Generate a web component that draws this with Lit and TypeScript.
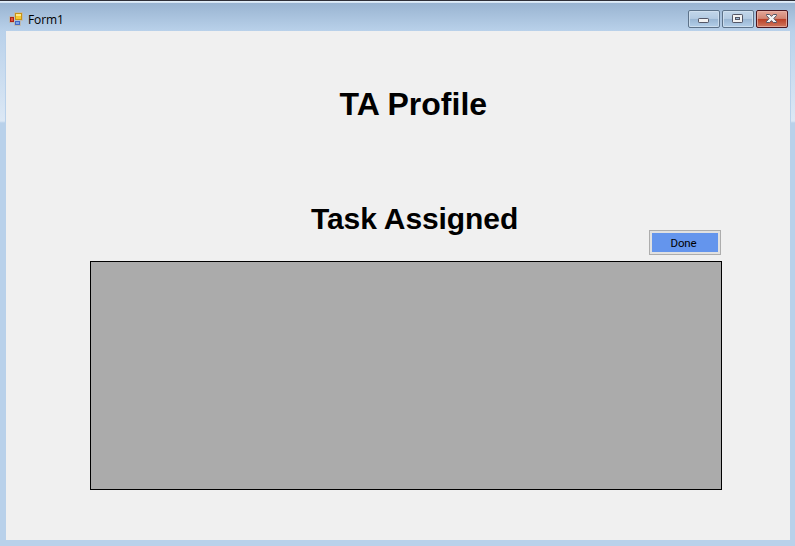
import { LitElement, html, css } from "lit";
import { customElement } from "lit/decorators.js";

@customElement("title-bar")
class TitleBar extends LitElement {
  static styles = css`
    :host { display: flex; height: 31px; box-sizing: border-box; padding: 10px 7px 0 9px; font: 12px "Open Sans", "Noto Sans", sans-serif; color: #000; }
    .icon { width: 14px; height: 14px; margin-top: 2px; flex: none; }
    .label { margin: 1px auto 0 5px; line-height: 17px; letter-spacing: -0.1px; }
    .controls { display: flex; gap: 2px; }
    .control { display: block; width: 32px; height: 18px; }
  `;
  render() {
    return html`
      <svg class="icon" viewBox="0 0 14 14">
        <path d="M.5 4.5h5v-4h8v8h-2v5h-6v-3h-5z" fill="#b7c2cb" stroke="#bdb9af"/>
        <rect x="6.5" y="1.5" width="6" height="6" fill="#f5c92f" stroke="#c79316"/>
        <path d="M7 2h5v2H7z" fill="#ffe789"/>
        <rect x="1.5" y="5.5" width="3" height="4" fill="#e0503c" stroke="#ad2214"/>
        <rect x="6.5" y="9.5" width="4" height="3" fill="#7ba5ec" stroke="#3f67c4"/>
      </svg>
      <span class="label">Form1</span>
      <div class="controls">
        <svg class="control" viewBox="0 0 32 18">
          <defs>
            <linearGradient id="blue" x2="0" y2="1"><stop stop-color="#c3d7ea"/><stop offset=".47" stop-color="#b4cbe2"/><stop offset=".48" stop-color="#98b5d2"/><stop offset="1" stop-color="#b5d0ea"/></linearGradient>
          </defs>
          <rect x=".5" y=".5" width="31" height="17" rx="1.5" fill="url(#blue)" stroke="#5d7289"/>
          <rect x="1.5" y="1.5" width="29" height="15" rx="1" fill="none" stroke="#d3e2f0" stroke-opacity=".8"/>
          <rect x="10.5" y="8.5" width="10" height="4" rx=".7" fill="#f2f2f2" stroke="#535666"/>
        </svg>
        <svg class="control" viewBox="0 0 32 18">
          <defs>
            <linearGradient id="blue2" x2="0" y2="1"><stop stop-color="#c3d7ea"/><stop offset=".47" stop-color="#b4cbe2"/><stop offset=".48" stop-color="#98b5d2"/><stop offset="1" stop-color="#b5d0ea"/></linearGradient>
          </defs>
          <rect x=".5" y=".5" width="31" height="17" rx="1.5" fill="url(#blue2)" stroke="#5d7289"/>
          <rect x="1.5" y="1.5" width="29" height="15" rx="1" fill="none" stroke="#d3e2f0" stroke-opacity=".8"/>
          <rect x="10.5" y="4.5" width="10" height="8" rx=".7" fill="#f2f2f2" stroke="#535666"/>
          <rect x="13.5" y="7.5" width="4" height="2" fill="#9db9d5" stroke="#535666"/>
        </svg>
        <svg class="control" viewBox="0 0 32 18">
          <defs>
            <linearGradient id="red" x2="0" y2="1"><stop stop-color="#e5a99b"/><stop offset=".47" stop-color="#d28472"/><stop offset=".48" stop-color="#b93c23"/><stop offset="1" stop-color="#d07b62"/></linearGradient>
          </defs>
          <rect x=".5" y=".5" width="31" height="17" rx="1.5" fill="url(#red)" stroke="#4b1620"/>
          <rect x="1.5" y="1.5" width="29" height="15" rx="1" fill="none" stroke="#e9b5a9" stroke-opacity=".75"/>
          <path d="M10.5 4.5h3.2l1.8 1.9 1.8-1.9h3.2v1l-2.7 3 2.7 3v1h-3.2l-1.8-1.9-1.8 1.9h-3.2v-1l2.7-3-2.7-3z" fill="#f3f3f3" stroke="#535666"/>
        </svg>
      </div>`;
  }
}

@customElement("app-root")
class AppRoot extends LitElement {
  static styles = css`
    :host {
      display: flex; flex-direction: column; width: 795px; height: 546px; box-sizing: border-box; overflow: hidden;
      background:
        linear-gradient(#2f3038, #2f3038) 0 0 / 100% 1px no-repeat,
        linear-gradient(#e5f1fb, #d0e0f0) 0 1px / 100% 2px no-repeat,
        linear-gradient(#99b4d1, #b9d1ea) 0 3px / 100% 28px no-repeat,
        linear-gradient(#b9d1ea, #b9d1ea) 5px 31px / 786px 515px no-repeat,
        linear-gradient(#b9d1ea, #dce8f5 90px, #b9d1ea 92px) 0 31px / 100% 515px no-repeat;
    }
    .client { display: flex; flex-direction: column; width: 784px; height: 509px; margin-left: 6px; background: #f0f0f0; font-family: "Liberation Sans", Arial, sans-serif; color: #000; }
    h1, h2 { margin: 0; font-weight: 700; white-space: nowrap; }
    h1 { margin: 54px 0 0 333.5px; font-size: 32px; line-height: 38px; }
    h2 { margin: 77px 0 0 305px; font-size: 30px; line-height: 37px; height: 30px; letter-spacing: -0.1px; }
    .done { box-sizing: border-box; width: 72px; height: 25px; margin-left: 643px; padding: 0; border: 1px solid #adadad; outline: 0; background: #e1e1e1; display: flex; align-items: center; justify-content: center; }
    .face { width: 66px; height: 19px; background: #6495ed; font: 11.5px/20px Roboto, "Liberation Sans", sans-serif; letter-spacing: -0.2px; color: #000; text-align: center; text-indent: -3px; }
    .grid { box-sizing: border-box; width: 632px; height: 229px; margin: 6px 0 0 84px; background: #ababab; border: 1px solid #000; }
  `;
  render() {
    return html`
      <title-bar></title-bar>
      <main class="client">
        <h1>TA Profile</h1>
        <h2>Task Assigned</h2>
        <button class="done"><div class="face">Done</div></button>
        <div class="grid"></div>
      </main>`;
  }
}
